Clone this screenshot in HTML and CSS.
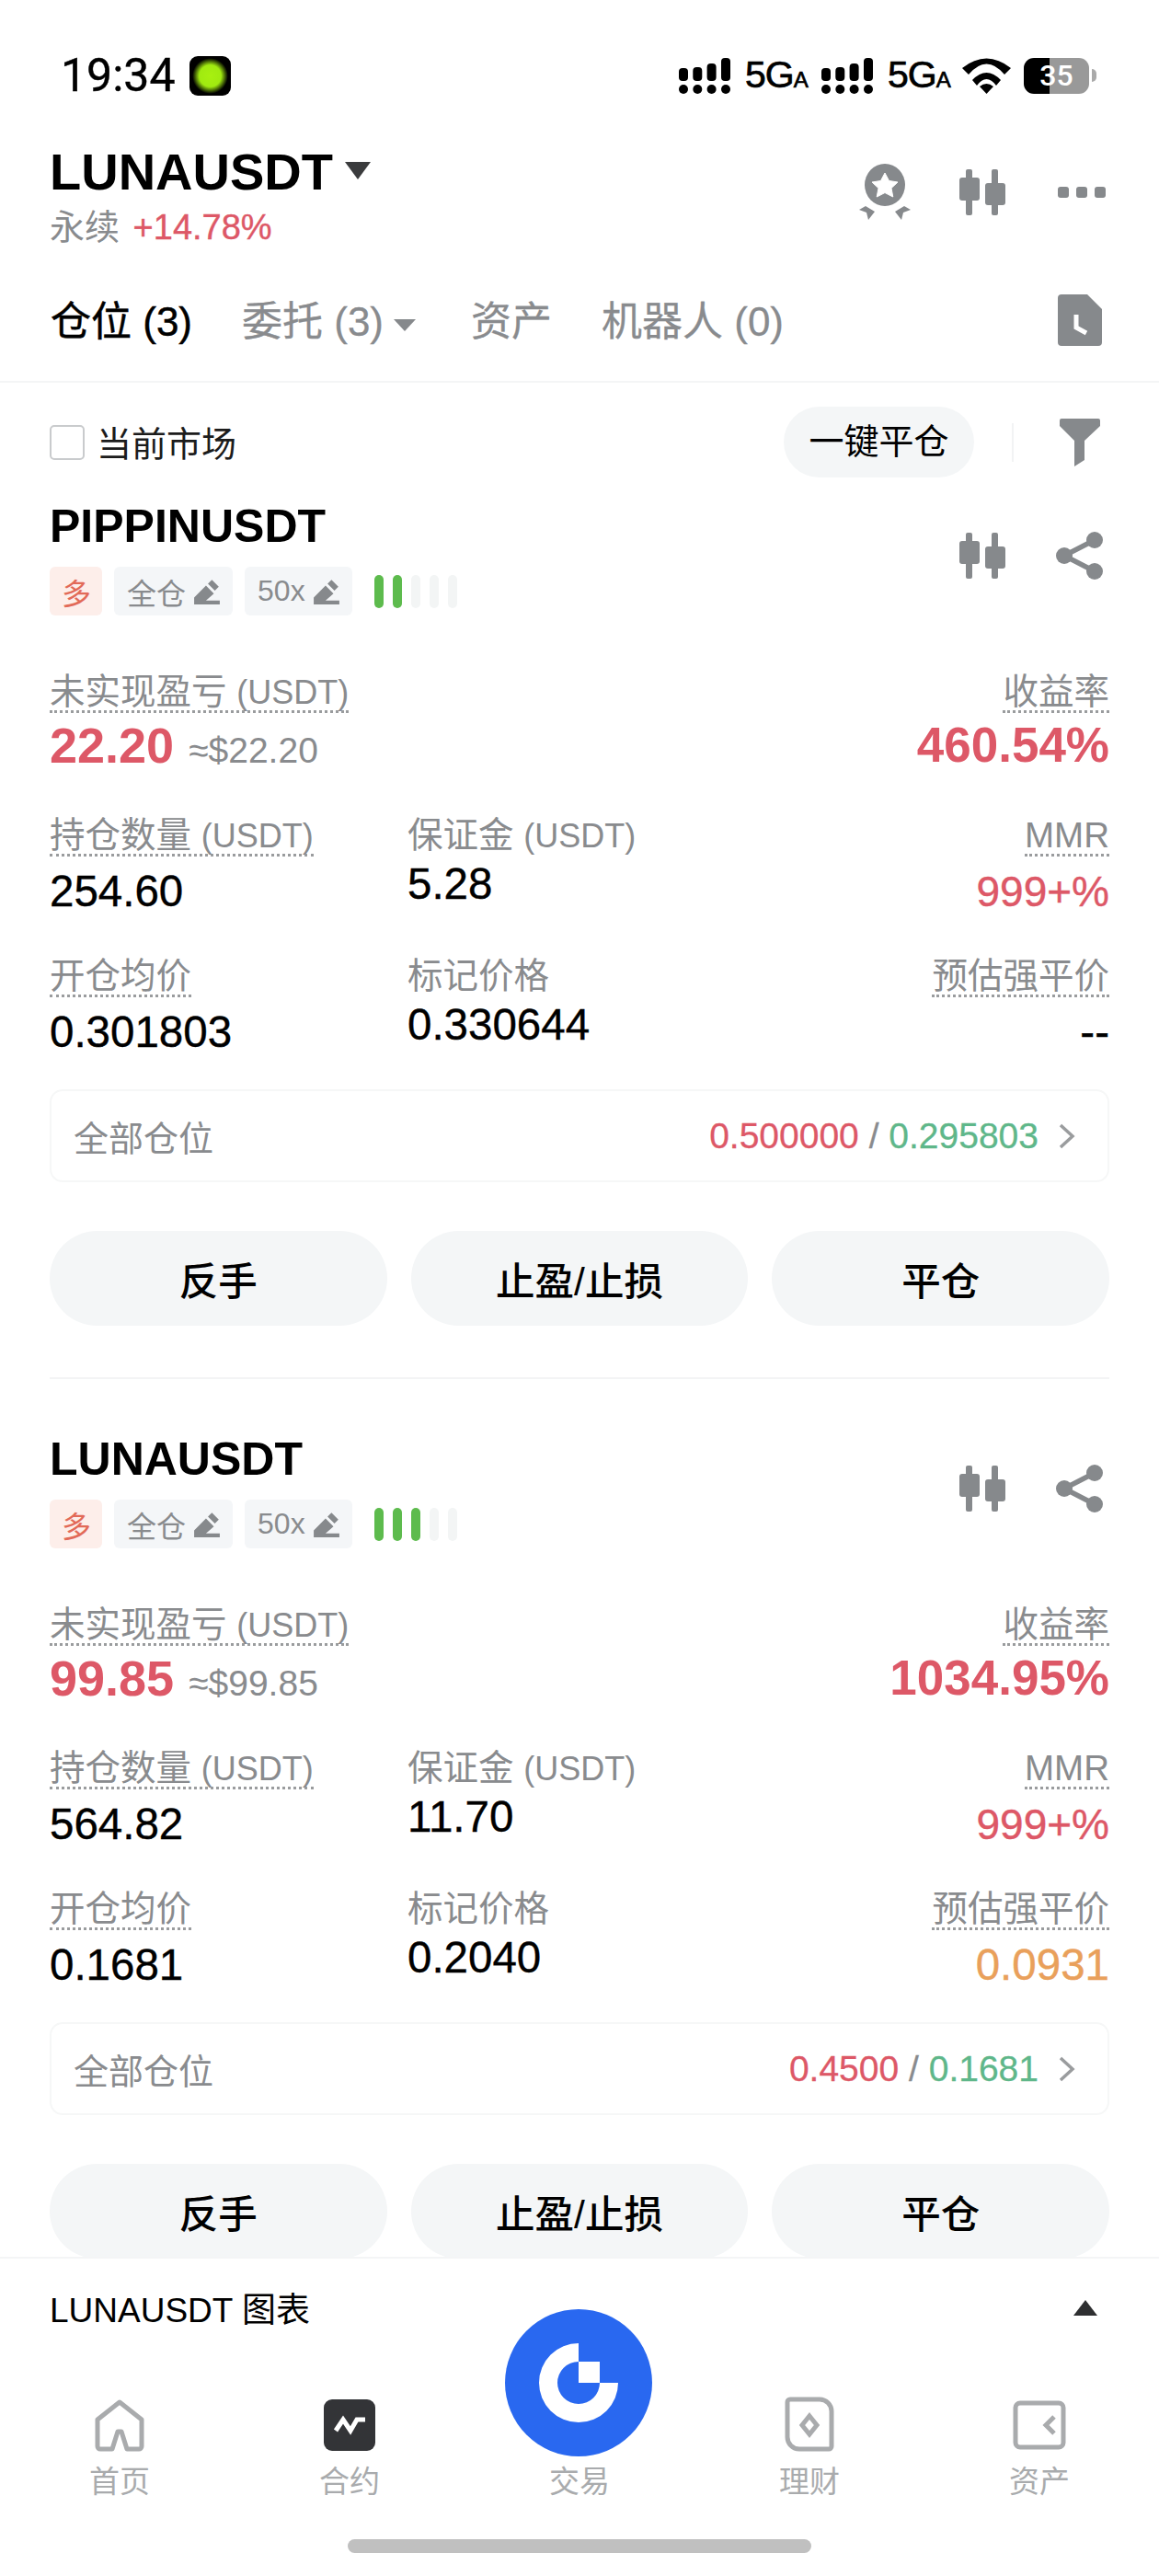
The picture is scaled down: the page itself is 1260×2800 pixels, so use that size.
FILE: index.html
```html
<!DOCTYPE html>
<html lang="zh-CN">
<head>
    <meta charset="UTF-8">
    <meta name="viewport" content="width=device-width, initial-scale=1.0">
    <title>LUNAUSDT 仓位</title>
    <link rel="stylesheet" href="styles.css">
</head>
<body>
    <svg class="sprites" width="0" height="0">
        <symbol id="candles" viewBox="0 0 50 50">
            <g fill="#86898c">
                <rect x="7" y="0" width="7" height="50" rx="2"/>
                <rect x="0" y="9" width="22" height="25" rx="3"/>
                <rect x="35" y="0" width="7" height="50" rx="2"/>
                <rect x="28" y="15" width="22" height="24" rx="3"/>
            </g>
        </symbol>
        <symbol id="share" viewBox="0 0 52 52">
            <path d="M42 9 9 26l33 17" fill="none" stroke="#86898c" stroke-width="5.500"/>
            <circle cx="42" cy="9" r="9" fill="#86898c"/>
            <circle cx="9" cy="26" r="9" fill="#86898c"/>
            <circle cx="42" cy="43" r="9" fill="#86898c"/>
        </symbol>
        <symbol id="pen" viewBox="0 0 28 28">
            <path d="M1 27v-7L13 8l8 8-8 7h14v4zM15 6l4-4 7 7-4 4z" fill="#86898c"/>
        </symbol>
        <symbol id="signal" viewBox="0 0 56 39">
            <g fill="#000">
                <rect x="0" y="29" width="10" height="10" rx="5"/>
                <rect x="15.300" y="29" width="10" height="10" rx="5"/>
                <rect x="30.600" y="29" width="10" height="10" rx="5"/>
                <rect x="46" y="29" width="10" height="10" rx="5"/>
                <rect x="0" y="11" width="10" height="14" rx="4"/>
                <rect x="15.300" y="10" width="10" height="15" rx="4"/>
                <rect x="30.600" y="6" width="10" height="19" rx="4"/>
                <rect x="46" y="0" width="10" height="25" rx="4"/>
            </g>
        </symbol>
    </svg>

    <div class="phone">
        <div class="status-bar">
            <span class="clock">19:34</span>
            <span class="notify"></span>
            <div class="status-right">
                <svg class="signal"><use href="#signal"/></svg>
                <span class="net">5G<small>A</small></span>
                <svg class="signal"><use href="#signal"/></svg>
                <span class="net">5G<small>A</small></span>
                <svg class="wifi" viewBox="0 0 53 39"><path d="M0 11Q26.500-10 53 11L46 18Q26.500-5 7 18ZM11 24Q26.500 8 42 24L37 30Q26.500 16 16 30ZM26.500 39L19 31Q26.500 25 34 31Z" fill="#000"/></svg>
                <span class="battery">35</span>
                <span class="battery-nub"></span>
            </div>
        </div>

        <header class="top">
            <div>
                <div class="pair">LUNAUSDT<i class="caret caret-big"></i></div>
                <div class="sub">永续 <span class="up">+14.78%</span></div>
            </div>
            <div class="top-icons">
                <svg class="medal" viewBox="0 0 56 62">
                    <ellipse cx="28" cy="23" rx="22" ry="23" fill="#86898c"/>
                    <path d="M28 10l4.500 8.500 9.500 1.500-7 6.500 1.800 9.500-8.800-4.500-8.800 4.500 1.800-9.500-7-6.500 9.500-1.500z" fill="#fff" stroke="#fff" stroke-width="1" stroke-linejoin="round"/>
                    <path d="M7 46l-7 4 8 3 2 8 7-9zM49 46l7 4-8 3-2 8-7-9z" fill="#86898c"/>
                </svg>
                <svg class="candles"><use href="#candles"/></svg>
                <span class="more"><i></i><i></i><i></i></span>
            </div>
        </header>

        <nav class="tabs">
            <span class="tab active">仓位 (3)</span>
            <span class="tab">委托 (3)<i class="caret caret-small"></i></span>
            <span class="tab">资产</span>
            <span class="tab">机器人 (0)</span>
            <svg class="history" viewBox="0 0 48 56">
                <path d="M4 0h28l16 16v36a4 4 0 0 1-4 4H4a4 4 0 0 1-4-4V4a4 4 0 0 1 4-4z" fill="#86898c"/>
                <path d="M20 22v14l11 6" fill="none" stroke="#fff" stroke-width="5"/>
            </svg>
        </nav>

        <main class="content">
            <div class="filter-row">
                <span class="check"></span>
                <span class="check-label">当前市场</span>
                <span class="close-all">一键平仓</span>
                <span class="sep"></span>
                <svg class="funnel" viewBox="0 0 44 52"><path d="M2 0h40a2 2 0 0 1 2 2v6L27 24v21l-11 7V24L0 8V2a2 2 0 0 1 2-2z" fill="#86898c"/></svg>
            </div>

            <section class="card">
                <div class="card-head">
                    <div>
                        <h2>PIPPINUSDT</h2>
                        <div class="tags">
                            <span class="tag tag-long">多</span>
                            <span class="tag">全仓<svg class="pen"><use href="#pen"/></svg></span>
                            <span class="tag">50x<svg class="pen"><use href="#pen"/></svg></span>
                            <span class="bars"><i class="on"></i><i class="on"></i><i></i><i></i><i></i></span>
                        </div>
                    </div>
                    <div class="card-icons">
                        <svg class="candles"><use href="#candles"/></svg>
                        <svg class="share"><use href="#share"/></svg>
                    </div>
                </div>
                <div class="metrics">
                    <div class="metric wide">
                        <span class="label">未实现盈亏 <span class="unit">(USDT)</span></span>
                        <div class="pnl"><b class="up">22.20</b><span>≈$22.20</span></div>
                    </div>
                    <div class="metric right">
                        <span class="label">收益率</span>
                        <div class="pnl"><b class="up rate">460.54%</b></div>
                    </div>
                    <div class="metric">
                        <span class="label">持仓数量 <span class="unit">(USDT)</span></span>
                        <div class="value">254.60</div>
                    </div>
                    <div class="metric plain">
                        <span class="label">保证金 <span class="unit">(USDT)</span></span>
                        <div class="value">5.28</div>
                    </div>
                    <div class="metric right">
                        <span class="label">MMR</span>
                        <div class="value up">999+%</div>
                    </div>
                    <div class="metric">
                        <span class="label">开仓均价</span>
                        <div class="value">0.301803</div>
                    </div>
                    <div class="metric plain">
                        <span class="label">标记价格</span>
                        <div class="value">0.330644</div>
                    </div>
                    <div class="metric right">
                        <span class="label">预估强平价</span>
                        <div class="value">--</div>
                    </div>
                </div>
                <div class="all-pos">
                    <span class="all-label">全部仓位</span>
                    <span class="all-val"><span class="up">0.500000</span> / <span class="down">0.295803</span></span>
                    <svg class="chevron" viewBox="0 0 20 28"><path d="M3 2l13 12L3 26" fill="none" stroke="#9a9c9e" stroke-width="3.500"/></svg>
                </div>
                <div class="actions">
                    <button>反手</button>
                    <button>止盈/止损</button>
                    <button>平仓</button>
                </div>
            </section>

            <section class="card">
                <div class="card-head">
                    <div>
                        <h2>LUNAUSDT</h2>
                        <div class="tags">
                            <span class="tag tag-long">多</span>
                            <span class="tag">全仓<svg class="pen"><use href="#pen"/></svg></span>
                            <span class="tag">50x<svg class="pen"><use href="#pen"/></svg></span>
                            <span class="bars"><i class="on"></i><i class="on"></i><i class="on"></i><i></i><i></i></span>
                        </div>
                    </div>
                    <div class="card-icons">
                        <svg class="candles"><use href="#candles"/></svg>
                        <svg class="share"><use href="#share"/></svg>
                    </div>
                </div>
                <div class="metrics">
                    <div class="metric wide">
                        <span class="label">未实现盈亏 <span class="unit">(USDT)</span></span>
                        <div class="pnl"><b class="up">99.85</b><span>≈$99.85</span></div>
                    </div>
                    <div class="metric right">
                        <span class="label">收益率</span>
                        <div class="pnl"><b class="up rate">1034.95%</b></div>
                    </div>
                    <div class="metric">
                        <span class="label">持仓数量 <span class="unit">(USDT)</span></span>
                        <div class="value">564.82</div>
                    </div>
                    <div class="metric plain">
                        <span class="label">保证金 <span class="unit">(USDT)</span></span>
                        <div class="value">11.70</div>
                    </div>
                    <div class="metric right">
                        <span class="label">MMR</span>
                        <div class="value up">999+%</div>
                    </div>
                    <div class="metric">
                        <span class="label">开仓均价</span>
                        <div class="value">0.1681</div>
                    </div>
                    <div class="metric plain">
                        <span class="label">标记价格</span>
                        <div class="value">0.2040</div>
                    </div>
                    <div class="metric right">
                        <span class="label">预估强平价</span>
                        <div class="value warn">0.0931</div>
                    </div>
                </div>
                <div class="all-pos">
                    <span class="all-label">全部仓位</span>
                    <span class="all-val"><span class="up">0.4500</span> / <span class="down">0.1681</span></span>
                    <svg class="chevron" viewBox="0 0 20 28"><path d="M3 2l13 12L3 26" fill="none" stroke="#9a9c9e" stroke-width="3.500"/></svg>
                </div>
                <div class="actions">
                    <button>反手</button>
                    <button>止盈/止损</button>
                    <button>平仓</button>
                </div>
            </section>
        </main>

        <footer class="bottom">
            <div class="chart-row">
                <span>LUNAUSDT 图表</span>
                <i class="caret-up"></i>
            </div>
            <div class="nav">
                <div class="nav-item">
                    <svg class="nav-icon" viewBox="0 0 58 62"><path d="M29 6 53 25v29a3 3 0 0 1-3 3H37l-6-19h-4l-6 19H8a3 3 0 0 1-3-3V25z" fill="none" stroke="#a9abad" stroke-width="5" stroke-linejoin="round"/></svg>
                    <span>首页</span>
                </div>
                <div class="nav-item">
                    <svg class="nav-icon" viewBox="0 0 58 62"><rect x="1" y="3" width="56" height="56" rx="9" fill="#333437"/><path d="M14 37l8-12 8 12 7-12h9" fill="none" stroke="#fff" stroke-width="5"/></svg>
                    <span>合约</span>
                </div>
                <div class="nav-item">
                    <span class="nav-icon"></span>
                    <span>交易</span>
                </div>
                <div class="nav-item">
                    <svg class="nav-icon" viewBox="0 0 58 62"><path d="M14 3h26a13 13 0 0 1 13 13v38a3 3 0 0 1-3 3H18A13 13 0 0 1 5 44V6a3 3 0 0 1 3-3z" fill="none" stroke="#a9abad" stroke-width="5"/><path d="M29 21l8 10-8 10-8-10z" fill="none" stroke="#a9abad" stroke-width="5"/></svg>
                    <span>理财</span>
                </div>
                <div class="nav-item">
                    <svg class="nav-icon" viewBox="0 0 58 62"><rect x="3" y="7" width="52" height="48" rx="5" fill="none" stroke="#a9abad" stroke-width="5"/><path d="M45 22l-9 9 9 9" fill="none" stroke="#a9abad" stroke-width="5"/></svg>
                    <span>资产</span>
                </div>
            </div>
            <div class="home-bar"></div>
            <div class="fab">
                <svg viewBox="0 0 160 160">
                    <circle cx="80" cy="80" r="80" fill="#2968f0"/>
                    <path d="M80 37A43 43 0 1 0 123 80H103A23 23 0 1 1 80 57z" fill="#fff"/>
                    <path d="M80 57h23v23H80z" fill="#fff"/>
                </svg>
            </div>
        </footer>
    </div>
</body>
</html>
```

FILE: styles.css
```css
body {
    margin: 0;
    background: #fff;
    font-family: "Liberation Sans", "Noto Sans CJK SC", sans-serif;
    color: #000;
}

.sprites {
    position: absolute;
}

.phone {
    width: 1260px;
    height: 2800px;
    display: flex;
    flex-direction: column;
    overflow: hidden;
    position: relative;
}

.up { color: #dd5867; }
.down { color: #5fb78a; }
.warn { color: #e9a05b; }

/* status bar */
.status-bar {
    height: 164px;
    flex: none;
    display: flex;
    align-items: center;
    padding: 0 66px;
}

.clock {
    font-family: Roboto, sans-serif;
    font-size: 50px;
    line-height: 56px;
    -webkit-text-stroke: 0.4px #000;
}

.notify {
    width: 45px;
    height: 43px;
    margin-left: 15px;
    border-radius: 9px;
    background: radial-gradient(circle at center, #a8f010 0, #a0ea10 38%, #000 62%);
}

.status-right {
    margin-left: auto;
    margin-right: 2px;
    display: flex;
    align-items: center;
}

.signal {
    width: 56px;
    height: 39px;
}

.net {
    width: 70px;
    margin: 3px 13px 0 16px;
    font-size: 41px;
    letter-spacing: -1px;
    line-height: 39px;
    white-space: nowrap;
    -webkit-text-stroke: 0.7px #000;
}

.net small {
    font-size: 24px;
    letter-spacing: 0;
}

.wifi {
    width: 53px;
    height: 39px;
    margin: 0 14px 0 -2px;
}

.battery {
    width: 71px;
    height: 39px;
    border-radius: 11px;
    background: linear-gradient(to right, #000 39%, #999 39%);
    color: #fff;
    font-family: Roboto, sans-serif;
    font-size: 32px;
    font-weight: 500;
    line-height: 39px;
    text-align: center;
}

.battery-nub {
    width: 5px;
    height: 14px;
    margin-left: 3px;
    border-radius: 0 5px 5px 0;
    background: #aaa;
}

/* header */
.top {
    flex: none;
    height: 106px;
    padding: 0 58px 0 54px;
    display: flex;
    justify-content: space-between;
}

.pair {
    font-size: 56px;
    font-weight: 700;
    line-height: 46px;
    display: flex;
    align-items: center;
}

.caret {
    display: inline-block;
    border-style: solid;
    border-color: #3a3b3d transparent transparent;
}

.caret-big {
    border-width: 19px 14px 0;
    margin: 0 0 4px 13px;
}

.caret-small {
    border-width: 13px 12px 0;
    border-top-color: #86898c;
    margin: 0 6px 0 11px;
    vertical-align: 5px;
}

.sub {
    margin-top: 14px;
    font-size: 38px;
    line-height: 46px;
    color: #898b8e;
}

.sub .up {
    margin-left: 4px;
    -webkit-text-stroke: 0.4px #dd5867;
}

.top-icons {
    display: flex;
    align-items: center;
    height: 90px;
}

.medal {
    width: 56px;
    height: 62px;
    margin-right: 53px;
}

.candles {
    width: 50px;
    height: 50px;
}

.more {
    display: flex;
    gap: 8px;
    margin-left: 57px;
}

.more i {
    width: 12px;
    height: 12px;
    border-radius: 3px;
    background: #86898c;
}

/* tabs */
.tabs {
    flex: none;
    height: 134px;
    box-sizing: border-box;
    margin-top: 12px;
    padding: 0 62px 4px 55px;
    display: flex;
    align-items: center;
    gap: 54px;
    font-size: 44px;
    color: #898b8e;
    border-bottom: 2px solid #f4f5f6;
    -webkit-text-stroke: 0.3px #898b8e;
}

.tab.active {
    color: #000;
    -webkit-text-stroke: 0.5px #000;
}

.history {
    width: 48px;
    height: 56px;
    margin-left: auto;
    margin-top: 4px;
}

/* list */
.content {
    flex: 1;
    min-height: 0;
    overflow: hidden;
    padding: 0 54px;
}

.filter-row {
    height: 129px;
    display: flex;
    align-items: center;
    font-size: 38px;
}

.check {
    width: 34px;
    height: 34px;
    border: 2px solid #c9cbcd;
    border-radius: 5px;
}

.check-label {
    margin-left: 13px;
    margin-bottom: 2px;
    color: #1c1c1c;
}

.close-all {
    margin-left: auto;
    width: 207px;
    height: 77px;
    border-radius: 39px;
    background: #f4f6f7;
    line-height: 77px;
    text-align: center;
}

.sep {
    width: 2px;
    height: 42px;
    margin: 0 50px 0 41px;
    background: #f2f3f4;
}

.funnel {
    width: 44px;
    height: 52px;
    margin-right: 10px;
}

.card {
    padding-top: 60px;
    border-top: 2px solid #f3f4f5;
}

.filter-row + .card {
    padding-top: 0;
    border-top: 0;
}

.card-head {
    display: flex;
    justify-content: space-between;
    align-items: center;
}

h2 {
    margin: 0;
    font-size: 50px;
    line-height: 54px;
    font-weight: 700;
}

.card-icons {
    display: flex;
    align-items: center;
    gap: 55px;
    padding-right: 6px;
    margin-top: -7px;
}

.share {
    width: 52px;
    height: 52px;
}

.tags {
    margin-top: 17px;
    display: flex;
    align-items: center;
    gap: 13px;
}

.tag {
    height: 53px;
    padding: 0 13px 0 14px;
    display: flex;
    align-items: center;
    gap: 8px;
    border-radius: 6px;
    background: #f4f6f8;
    color: #898b8e;
    font-size: 32px;
}

.tag-long {
    padding: 0 12px 0 13px;
    background: #fdeeea;
    color: #e26a58;
}

.pen {
    width: 30px;
    height: 30px;
}

.bars {
    display: flex;
    gap: 10px;
    margin-left: 11px;
}

.bars i {
    width: 10px;
    height: 36px;
    border-radius: 5px;
    background: #f3f5f5;
}

.bars i.on {
    background: #5dbb4d;
}

.metrics {
    margin-top: 60px;
    display: grid;
    grid-template-columns: 389px 1fr auto;
    row-gap: 41px;
    align-items: start;
}

.metric.wide {
    grid-column: 1 / 3;
}

.metric.right {
    text-align: right;
}

.label {
    display: inline-block;
    height: 46px;
    font-size: 38.500px;
    line-height: 46px;
    color: #898b8e;
    border-bottom: 3px dotted #9a9c9e;
    box-sizing: border-box;
}

.unit {
    font-size: 36px;
}

.plain .label {
    border-bottom: 0;
}

.pnl {
    margin-top: 5px;
    height: 64px;
    line-height: 60px;
}

.pnl b {
    font-size: 54px;
}

.pnl b.rate {
    font-size: 53px;
}

.pnl span {
    margin-left: 16px;
    font-size: 39px;
    color: #898b8e;
}

.value {
    margin-top: 10px;
    font-size: 47.500px;
    line-height: 56px;
    -webkit-text-stroke: 0.4px;
}

.value.up {
    font-size: 46px;
}

.plain .value {
    margin-top: 2px;
}

.all-pos {
    margin-top: 34px;
    height: 101px;
    box-sizing: border-box;
    padding: 0 34px 0 24px;
    display: flex;
    align-items: center;
    border: 2px solid #f6f7f7;
    border-radius: 14px;
    font-size: 38px;
}

.all-label {
    color: #898b8e;
}

.all-val {
    margin-left: auto;
    color: #898b8e;
    font-size: 39px;
    -webkit-text-stroke: 0.3px;
}

.chevron {
    width: 20px;
    height: 28px;
    margin-left: 21px;
}

.actions {
    margin-top: 53px;
    margin-bottom: 56px;
    display: grid;
    grid-template-columns: repeat(3, 1fr);
    gap: 26px;
}

button {
    height: 103px;
    border: none;
    border-radius: 52px;
    background: #f4f6f7;
    color: #000;
    font-family: inherit;
    font-size: 42.500px;
    font-weight: 500;
}

/* bottom sheet */
.bottom {
    flex: none;
    height: 345px;
    border-top: 2px solid #f4f5f6;
    background: #fff;
    position: relative;
}

.chart-row {
    height: 106px;
    padding: 0 67px 0 54px;
    display: flex;
    align-items: center;
    justify-content: space-between;
    font-size: 37px;
}

.caret-up {
    border-style: solid;
    border-width: 0 13px 17px;
    border-color: transparent transparent #2e2f31;
}

.nav {
    margin-top: 39px;
    padding: 0 5px;
    display: grid;
    grid-template-columns: repeat(5, 250px);
}

.nav-item {
    display: flex;
    flex-direction: column;
    align-items: center;
    font-size: 33px;
    line-height: 40px;
    color: #a9abad;
}

.nav-icon {
    width: 58px;
    height: 62px;
    margin: 5px 0 11px;
}

.home-bar {
    width: 504px;
    height: 15px;
    margin: 42px auto 0;
    border-radius: 8px;
    background: #c0c0c0;
}

.fab {
    position: absolute;
    left: 549px;
    top: 55px;
    width: 160px;
    height: 160px;
}

.fab svg {
    display: block;
    width: 160px;
    height: 160px;
}
```
